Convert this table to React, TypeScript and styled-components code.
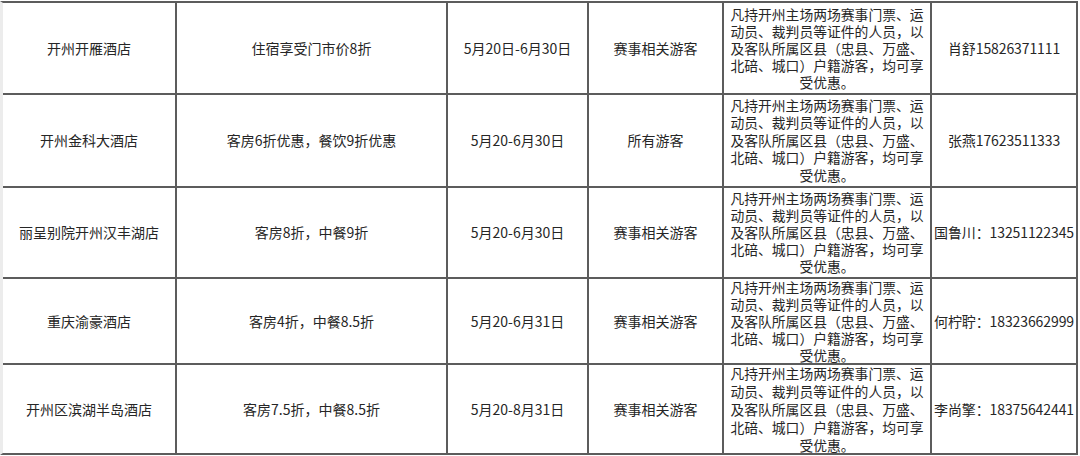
import React from "react";
import styled, { createGlobalStyle } from "styled-components";

const Global = createGlobalStyle`
  html, body {
    margin: 0;
    padding: 0;
    background: #fff;
  }
  body {
    font-family: "Noto Sans CJK SC", "Noto Sans", sans-serif;
    color: #262626;
  }
`;

interface Offer {
  hotel: string;
  discount: string;
  period: string;
  target: string;
  contact: string;
}

const offers: Offer[] = [
  { hotel: "开州开雁酒店", discount: "住宿享受门市价8折", period: "5月20日-6月30日", target: "赛事相关游客", contact: "肖舒15826371111" },
  { hotel: "开州金科大酒店", discount: "客房6折优惠，餐饮9折优惠", period: "5月20-6月30日", target: "所有游客", contact: "张燕17623511333" },
  { hotel: "丽呈别院开州汉丰湖店", discount: "客房8折，中餐9折", period: "5月20-6月30日", target: "赛事相关游客", contact: "国鲁川：13251122345" },
  { hotel: "重庆渝豪酒店", discount: "客房4折，中餐8.5折", period: "5月20-6月31日", target: "赛事相关游客", contact: "何柠聍：18323662999" },
  { hotel: "开州区滨湖半岛酒店", discount: "客房7.5折，中餐8.5折", period: "5月20-8月31日", target: "赛事相关游客", contact: "李尚擎：18375642441" },
];

// eligibility text is the same for every hotel, broken as in the sheet
const rules = [
  "凡持开州主场两场赛事门票、运",
  "动员、裁判员等证件的人员，以",
  "及客队所属区县（忠县、万盛、",
  "北碚、城口）户籍游客，均可享",
  "受优惠。",
];

const Sheet = styled.div`
  margin-top: 1px;
  width: 1078px;
  display: grid;
  grid-template-columns: 172px 269px 139px 133px 206px 144px;
  grid-template-rows: 90px 91px 89px 84px 88px;
  gap: 2px;
  background: #5c5c5c;
  border-top: 2px solid #5c5c5c;
  border-bottom: 2px solid #5c5c5c;
  border-right: 2px solid #5c5c5c;
  border-left: 3px solid #ececec;
  box-sizing: border-box;
`;

const Cell = styled.div`
  background: #fff;
  display: flex;
  align-items: center;
  justify-content: center;
  text-align: center;
  font-size: 14px;
  line-height: 17px;
  white-space: nowrap;
  overflow: visible;
`;

const Rules = styled.div`
  display: flex;
  flex-direction: column;
  align-items: center;
  position: relative;
  z-index: 1;
`;

const RuleLine = styled.div<{ $lh: number }>`
  display: block;
  height: ${(p) => p.$lh}px;
  line-height: ${(p) => p.$lh}px;
  font-size: 13.8px;
`;

const Contact = styled(Cell)`
  letter-spacing: -0.1px;
`;

const lineHeights = [17, 17.5, 17, 17, 18];

export default function App() {
  return (
    <>
      <Global />
      <Sheet>
        {offers.map((o, i) => (
          <React.Fragment key={i}>
            <Cell>{o.hotel}</Cell>
            <Cell>{o.discount}</Cell>
            <Cell>{o.period}</Cell>
            <Cell>{o.target}</Cell>
            <Cell>
              <Rules>
                {rules.map((r) => (
                  <RuleLine key={r} $lh={lineHeights[i]}>
                    {r}
                  </RuleLine>
                ))}
              </Rules>
            </Cell>
            <Contact>{o.contact}</Contact>
          </React.Fragment>
        ))}
      </Sheet>
    </>
  );
}
